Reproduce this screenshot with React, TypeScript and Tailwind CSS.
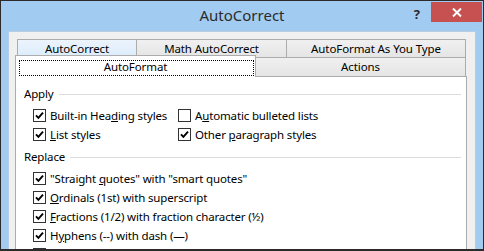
import type { ReactNode } from 'react';

const tabBase = "flex items-center justify-center border border-[#acacac] text-[11.5px] tracking-[-0.1px] text-black leading-none";
const tabIdle = "bg-gradient-to-b from-[#f0f0f0] to-[#e5e5e5]";

function Check({ on }: { on: boolean }) {
  return (
    <div className="w-[13px] h-[13px] border border-[#333333] bg-white flex items-center justify-center shrink-0">
      {on && (
        <svg width="11" height="11" viewBox="0 0 11 11">
          <path d="M2 5.3 L4.4 7.8 L9 2.6" fill="none" stroke="#000" strokeWidth="1.9" />
        </svg>
      )}
    </div>
  );
}

function Item({ on, children, className = "" }: { on: boolean; children?: ReactNode; className?: string }) {
  return (
    <div className={"flex items-center gap-[4px] h-[19px] " + className}>
      <Check on={on} />
      {children && <span className="whitespace-nowrap">{children}</span>}
    </div>
  );
}

function Section({ title, className = "" }: { title: string; className?: string }) {
  return (
    <div className={"flex items-center h-[16px] pr-[5px] " + className}>
      <span>{title}</span>
      <div className="flex-1 h-px bg-[#dcdcdc] ml-[5px]" />
    </div>
  );
}

export default function App() {
  return (
    <div className="w-[484px] h-[251px] overflow-hidden border border-b-2 border-[#2b2b2b] bg-[#a2cbf1] flex flex-col font-['Segoe_UI','Noto_Sans',sans-serif]">
      {/* title bar */}
      <div className="relative h-[30px] shrink-0 flex items-center justify-center">
        <span className="text-[15px] text-[#2b2b2b] -mt-[1px]">AutoCorrect</span>
        <span className="absolute right-[63px] top-[4px] text-[13px] font-bold text-[#2b2b2b]">?</span>
        <div className="absolute right-[1px] top-[1px] w-[51px] h-[20px] bg-[#c75050] flex items-center justify-center">
          <svg width="10" height="9" viewBox="0 0 10 9">
            <path d="M1 0.5 L9 8.5 M9 0.5 L1 8.5" stroke="#fff" strokeWidth="2" />
          </svg>
        </div>
      </div>

      {/* dialog body */}
      <div className="flex-1 mx-[7px] bg-[#f0f0f0] border border-b-0 border-[#b7cde4] pt-[7px] pl-[6px] flex flex-col">
        <div className="flex ml-[2px] h-[19px]">
          <div className={tabBase + " w-[120px] border-[#7eb4ea] bg-gradient-to-b from-[#ecf4fc] to-[#dcecfc] relative z-[1]"}>AutoCorrect</div>
          <div className={tabBase + " " + tabIdle + " w-[151px] -ml-px"}>Math AutoCorrect</div>
          <div className={tabBase + " " + tabIdle + " w-[180px] -ml-px"}>AutoFormat As You Type</div>
        </div>
        <div className="flex h-[19px] -mt-px relative z-10">
          <div className={tabBase + " relative w-[241px] h-[22px] -mt-[2px] bg-white border-b-0"}>
            <div className="absolute left-[3px] right-[1px] top-[4px] bottom-[1px] border border-dotted border-black" />
            <span className="relative">AutoFormat</span>
          </div>
          <div className={tabBase + " " + tabIdle + " w-[211px] h-[19px] -ml-px border-b-0"}>Actions</div>
        </div>

        {/* tab page */}
        <div className="w-[452px] flex-1 bg-white border border-b-0 border-[#acacac] pt-[9px] pl-[8px] text-[11.5px] tracking-[-0.15px] text-black">
          <Section title="Apply" />
          <div className="flex flex-col ml-[9px] mt-[4px]">
            <div className="flex">
              <Item on className="w-[145px]">Built-in Hea<u>d</u>ing styles</Item>
              <Item on={false}>A<u>u</u>tomatic bulleted lists</Item>
            </div>
            <div className="flex">
              <Item on className="w-[145px]"><u>L</u>ist styles</Item>
              <Item on>Other <u>p</u>aragraph styles</Item>
            </div>
          </div>
          <Section title="Replace" className="mt-[5px]" />
          <div className="flex flex-col ml-[9px] mt-[4px]">
            <Item on>"Straight <u>q</u>uotes" with "smart quotes"</Item>
            <Item on><u>O</u>rdinals (1st) with superscript</Item>
            <Item on><u>F</u>ractions (1/2) with fraction character (½)</Item>
            <Item on>H<u>y</u>phens (--) with dash (—)</Item>
            <Item on={false} />
          </div>
        </div>
      </div>
    </div>
  );
}
